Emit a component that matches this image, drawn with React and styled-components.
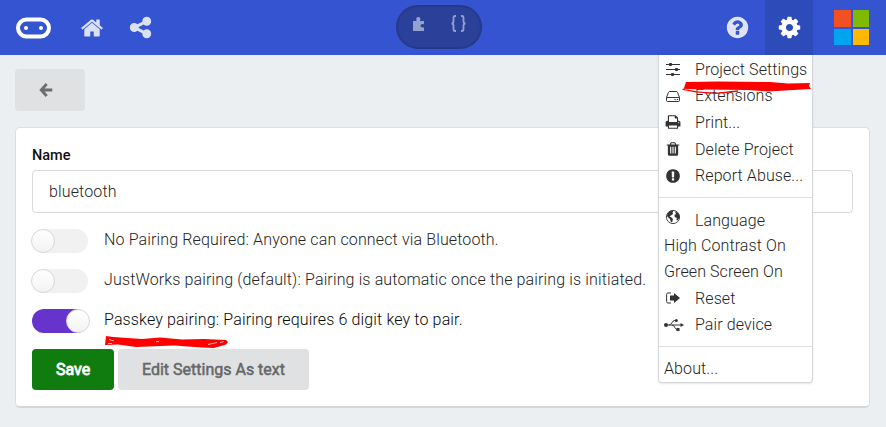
import React from "react";
import styled, { createGlobalStyle } from "styled-components";

const Global = createGlobalStyle`
  *{box-sizing:border-box}
  body{margin:0;background:#ebeff1;font-family:Roboto,sans-serif;font-size:16px;font-weight:300;color:#242424;overflow:hidden}
`;
const Page = styled.div`position:relative;width:886px;height:427px;`;
const Header = styled.header`height:55px;background:#3454d1;display:flex;align-items:stretch;color:#fff;`;
const Left = styled.nav`width:396px;display:flex;align-items:center;padding-left:16px;`;
const Brand = styled.a`display:flex;width:64px;`;
const NavLink = styled.a`display:flex;width:48px;opacity:.82;`;
const Toggle = styled.div`width:86px;height:44px;margin-top:5px;border-radius:22px;background:#2a4099;border:2px solid #27398a;display:flex;align-items:center;padding:0 0 7px 14px;gap:24px;color:#93a0d0;`;
const Right = styled.nav`flex:1;display:flex;justify-content:flex-end;`;
const Cell = styled.a`width:${p => p.$w}px;display:flex;align-items:center;justify-content:center;padding-left:${p => p.$pad || 0}px;background:${p => p.$active ? "#2e4bba" : "transparent"};`;
const Faded = styled.span`display:flex;opacity:.84;`;
const Logo = styled.div`display:grid;grid-template-columns:repeat(2,1fr);gap:2px;width:35px;height:35px;`;
const Tile = styled.i`background:${p => p.$c};`;
const Main = styled.main`padding:14px 16px 0 15px;`;
const Button = styled.button`border:0;border-radius:4px;height:41px;width:${p => p.$w}px;padding:0;font:400 16px Roboto,sans-serif;-webkit-text-stroke:${p => p.$primary ? .8 : .5}px currentColor;letter-spacing:${p => p.$ls || 0}px;background:${p => p.$primary ? "#107c10" : "#dfe1e2"};color:${p => p.$primary ? "#fff" : "#666768"};display:flex;align-items:center;justify-content:center;`;
const BackButton = styled(Button)`height:42px;padding-right:9px;color:#6d6d6e;`;
const Card = styled.section`margin-top:16px;height:281px;background:#fff;border:1px solid #dcdfe1;border-bottom:2px solid #d4d7d9;border-radius:5px;padding:18px 16px 0;`;
const Label = styled.label`display:block;font-weight:500;font-size:14.5px;line-height:20px;color:#111;`;
const Input = styled.input`display:block;width:821px;height:43px;margin:4px 0 16px;border:1px solid #d9d9da;border-radius:4px;padding:0 16px;font:300 16px Roboto,sans-serif;letter-spacing:.14px;color:#242424;outline:0;`;
const Row = styled.div`display:flex;align-items:center;height:24px;margin-bottom:16px;`;
const Track = styled.span`width:56px;height:24px;border-radius:12px;background:${p => p.$on ? "#6633cc" : "#f1f1f1"};display:flex;justify-content:${p => p.$on ? "flex-end" : "flex-start"};`;
const Knob = styled.span`width:24px;height:24px;border-radius:50%;margin:0 -2px 0 -1px;background:linear-gradient(#fff,#f3f3f3);border:1px solid #d8d8d8;`;
const Text = styled.span`margin-left:16px;line-height:20px;padding-bottom:2px;white-space:pre;color:${p => p.$dark ? "#080808" : "#242424"};letter-spacing:.14px;`;
const Actions = styled.div`display:flex;gap:4px;`;
const Menu = styled.div`position:absolute;left:658px;top:55px;width:155px;height:328px;background:#fff;border:1px solid #d5d8da;border-top:0;border-radius:0 0 4px 4px;box-shadow:0 1px 2px rgba(0,0,0,.1);padding-top:1px;`;
const Item = styled.div`display:flex;align-items:center;height:${p => p.$h}px;padding-left:5px;white-space:nowrap;letter-spacing:.1px;`;
const IconSlot = styled.span`width:31px;display:flex;padding-left:${p => p.$x || 0}px;padding-bottom:${p => p.$up || 0}px;color:#333;`;
const Rule = styled.div`height:1px;background:#dfdfdf;margin:${p => p.$m};`;
const Stroke = styled.svg`position:absolute;left:${p => p.$x}px;top:${p => p.$y}px;`;

const paths = {
  home: "M1472 992v480q0 26-19 45t-45 19h-384v-384h-256v384h-384q-26 0-45-19t-19-45v-480q0-1 .5-3t.5-3l575-474 575 474q1 2 1 6zm223-69l-62 74q-8 9-21 11h-3q-13 0-21-7l-692-577-692 577q-12 8-24 7-13-2-21-11l-62-74q-8-10-7-23.5t11-21.5l719-599q32-26 76-26t76 26l244 204v-195q0-14 9-23t23-9h192q14 0 23 9t9 23v408l219 182q10 8 11 21.5t-7 23.5z",
  share: "M1344 1024q133 0 226.5 93.5t93.5 226.5-93.5 226.5-226.5 93.5-226.5-93.5-93.5-226.5q0-12 2-34l-360-180q-92 86-218 86-133 0-226.5-93.5t-93.5-226.5 93.5-226.5 226.5-93.5q126 0 218 86l360-180q-2-22-2-34 0-133 93.5-226.5t226.5-93.5 226.5 93.5 93.5 226.5-93.5 226.5-226.5 93.5q-126 0-218-86l-360 180q2 22 2 34t-2 34l360 180q92-86 218-86z",
  cog: "M1152 896q0-106-75-181t-181-75-181 75-75 181 75 181 181 75 181-75 75-181zm512-109v222q0 12-8 23t-20 13l-185 28q-19 54-39 91 35 50 107 138 10 12 10 25t-9 23q-27 37-99 108t-94 71q-12 0-26-9l-138-108q-44 23-91 38-16 136-29 186-7 28-36 28h-222q-14 0-24.5-8.5t-11.5-21.5l-28-184q-49-16-90-37l-141 107q-10 9-25 9-14 0-25-11-126-114-165-168-7-10-7-23 0-12 8-23 15-21 51-66.5t54-70.5q-27-50-41-99l-183-27q-13-2-21-12.5t-8-23.5v-222q0-12 8-23t19-13l186-28q14-46 39-92-40-57-107-138-10-12-10-24 0-10 9-23 26-36 98.5-107.5t94.5-71.5q13 0 26 10l138 107q44-23 91-38 16-136 29-186 7-28 36-28h222q14 0 24.5 8.5t11.5 21.5l28 184q49 16 90 37l142-107q9-9 24-9 13 0 25 10 129 119 165 170 7 8 7 22 0 12-8 23-15 21-51 66.5t-54 70.5q26 50 41 98l183 28q13 2 21 12.5t8 23.5z",
  help: "M1024 1376v-192q0-14-9-23t-23-9h-192q-14 0-23 9t-9 23v192q0 14 9 23t23 9h192q14 0 23-9t9-23zm256-672q0-88-55.5-163t-138.5-116-170-41q-243 0-371 213-15 24 8 42l132 100q7 6 19 6 16 0 25-12 53-68 86-92 34-24 86-24 48 0 85.5 26t37.5 59q0 38-20 61t-68 45q-63 28-115.5 86.5t-52.5 125.5v36q0 14 9 23t23 9h192q14 0 23-9t9-23q0-19 21.5-49.5t54.5-49.5q32-18 49-28.5t46-35 44.5-48 28-60.5 12.5-81zm384 192q0 209-103 385.5t-279.5 279.5-385.5 103-385.5-103-279.5-279.5-103-385.5 103-385.5 279.5-279.5 385.5-103 385.5 103 279.5 279.5 103 385.5z",
  alert: "M896 128q209 0 385.5 103t279.5 279.5 103 385.5-103 385.5-279.5 279.5-385.5 103-385.5-103-279.5-279.5-103-385.5 103-385.5 279.5-279.5 385.5-103zm128 1247v-190q0-14-9-23.5t-22-9.5h-192q-13 0-23 10t-10 23v190q0 13 10 23t23 10h192q13 0 22-9.500t9-23.500zm-2-344l18-621q0-12-10-18-10-8-24-8h-220q-14 0-24 8-10 6-10 18l17 621q0 10 10 17.500t24 7.500h185q14 0 23.500-7.500t10.500-17.500z",
  trash: "M704 1376v-704q0-14-9-23t-23-9h-64q-14 0-23 9t-9 23v704q0 14 9 23t23 9h64q14 0 23-9t9-23zm256 0v-704q0-14-9-23t-23-9h-64q-14 0-23 9t-9 23v704q0 14 9 23t23 9h64q14 0 23-9t9-23zm256 0v-704q0-14-9-23t-23-9h-64q-14 0-23 9t-9 23v704q0 14 9 23t23 9h64q14 0 23-9t9-23zm-544-992h448l-48-117q-7-9-17-11h-317q-10 2-17 11zm928 32v64q0 14-9 23t-23 9h-96v948q0 83-47 143.5t-113 60.5h-832q-66 0-113-58.5t-47-141.5v-952h-96q-14 0-23-9t-9-23v-64q0-14 9-23t23-9h309l70-167q15-37 54-63t79-26h320q40 0 79 26t54 63l70 167h309q14 0 23 9t9 23z",
  print: "M448 1536h896v-256h-896v256zm0-640h896v-384h-160q-40 0-68-28t-28-68v-160h-640v640zm1152 64q0-26-19-45t-45-19-45 19-19 45 19 45 45 19 45-19 19-45zm128 0v416q0 13-9.5 22.5t-22.5 9.5h-224v160q0 40-28 68t-68 28h-960q-40 0-68-28t-28-68v-160h-224q-13 0-22.5-9.5t-9.5-22.5v-416q0-79 56.5-135.5t135.5-56.5h64v-544q0-40 28-68t68-28h672q40 0 88 20t76 48l152 152q28 28 48 76t20 88v256h64q79 0 135.5 56.5t56.5 135.5z",
};
const Glyph = ({ name, size }) => (
  <svg width={size} height={size} viewBox="0 0 1792 1792" fill="currentColor"><path d={paths[name]} /></svg>
);
const Small = ({ children, w = 16 }) => (
  <svg width={w} height="16" viewBox={`0 0 ${w} 16`} fill="none" stroke="currentColor">{children}</svg>
);
const Sliders = () => <Small><path d="M1 3.500h14M1 8.500h14M1 13.500h14" strokeWidth="1.100" /><path d="M5.500 2v3M11.500 7v3M7.500 12v3" strokeWidth="2.600" /></Small>;
const Drive = () => <Small><path d="M1.500 9.500 3.500 4.300Q3.800 3.500 4.600 3.500h6.800q.8 0 1.100.8l2 5.200v3q0 1-1 1h-11q-1 0-1-1zM1.500 9.500h13" strokeLinejoin="round" /><path d="M9.300 11.500h1.400M11.800 11.500h1.400" /></Small>;
const Globe = () => <Small><circle cx="8" cy="8" r="6.600" strokeWidth=".9" /><path d="M2.500 4.500 5 2h3.500l-1 1.500.5 1.500L6 6.500 4.500 7.200 6.500 8.500 8 10l-1 3.500-1.300-1L5 10 3 8.200 2 7zM10 2.500l2.500 1L14.300 6v3l-1.800 2.500-1-.5.3-2.200-2-.5L9.500 6l1.500-1z" fill="currentColor" stroke="none" /></Small>;
const Exit = () => <Small><path d="M6 3H2.800Q1.600 3 1.600 4.500v7Q1.600 13 2.800 13H6" /><path d="M5 5.500h4V3l6 5-6 5v-2.500H5z" fill="currentColor" stroke="none" /></Small>;
const Usb = () => <Small w={20}><path d="M2 8h15M5 8c3 0 3-4.500 5.500-4.500H12M8 8c3 0 2.500 4.500 5 4.500h1" /><circle cx="2" cy="8" r="2" fill="currentColor" stroke="none" /><circle cx="12.300" cy="3.500" r="1.500" fill="currentColor" stroke="none" /><path d="M12.500 11h3v3h-3zM16.500 6l3.500 2-3.500 2z" fill="currentColor" stroke="none" /></Small>;

const groups = [
  [["Project Settings", <Sliders />, 26.5, 1], ["Extensions", <Drive />, 26.5, 1], ["Print...", <Glyph name="print" size={16} />, 26.5, 1], ["Delete Project", <Glyph name="trash" size={16} />, 27, 1], ["Report Abuse...", <Glyph name="alert" size={16} />, 26, 1]],
  [["Language", <Globe />, 25.5, 1, 6], ["High Contrast On", null, 25.5], ["Green Screen On", null, 26], ["Reset", <Exit />, 27, 1], ["Pair device", <Usb />, 26]],
  [["About...", null, 26]],
];

export default function App() {
  return <Page>
    <Global />
    <Header>
      <Left>
        <Brand><svg width="36" height="22" viewBox="0 0 36 22"><rect x="2" y="2.500" width="31" height="17" rx="8.500" fill="none" stroke="#fff" strokeWidth="4" /><circle cx="10" cy="11" r="2" fill="#fff" /><circle cx="25" cy="11" r="2" fill="#fff" /></svg></Brand>
        <NavLink><Glyph name="home" size={24} /></NavLink>
        <NavLink><Glyph name="share" size={25} /></NavLink>
      </Left>
      <Toggle>
        <svg width="14" height="16" viewBox="0 0 14 16" fill="currentColor"><path d="M1 5h3.500Q3.500 1 6.300 1t1.800 4H12v3.200Q8.500 7.500 8.500 9.800T12 11.500V15H1z" /></svg>
        <svg width="17" height="18" viewBox="0 0 17 18" fill="none" stroke="currentColor" strokeWidth="1.800"><path d="M6 1H5Q3.500 1 3.500 3v3.500Q3.500 8.500 1.500 8.500 3.500 8.500 3.500 10.500V14q0 2 1.500 2h1M11 1h1q1.500 0 1.500 2v3.500q0 2 2 2-2 0-2 2V14q0 2-1.500 2h-1" /></svg>
      </Toggle>
      <Right>
        <Cell $w={56}><Faded><Glyph name="help" size={25} /></Faded></Cell>
        <Cell $w={48} $active><Glyph name="cog" size={25} /></Cell>
        <Cell $w={73} $pad={4}><Logo><Tile $c="#f25022" /><Tile $c="#7fba00" /><Tile $c="#00a4ef" /><Tile $c="#ffb900" /></Logo></Cell>
      </Right>
    </Header>
    <Main>
      <BackButton $w={70}><svg width="14" height="14" viewBox="0 0 14 14" fill="none" stroke="currentColor" strokeWidth="2.800"><path d="M7.700 1 2.200 7 7.700 13M2.500 7H13.300" /></svg></BackButton>
      <Card>
        <Label>Name</Label>
        <Input defaultValue="bluetooth" />
        <Row><Track><Knob /></Track><Text>No Pairing Required: Anyone can connect via Bluetooth.</Text></Row>
        <Row><Track><Knob /></Track><Text>JustWorks pairing (default): Pairing is automatic once the pairing is initiated.</Text></Row>
        <Row><Track $on><Knob /></Track><Text $dark>Passkey pairing: Pairing requires 6 digit key to pair.</Text></Row>
        <Actions><Button $primary $w={82}>Save</Button><Button $w={191}>Edit Settings As text</Button></Actions>
      </Card>
    </Main>
    <Menu>
      {groups.map((g, i) => <React.Fragment key={i}>
        {i > 0 && <Rule $m={i === 1 ? "8px 0 10px" : "8px 0 9px"} />}
        {g.map(([t, icon, h, x, up]) => <Item key={t} $h={h}>{icon && <IconSlot $x={x} $up={up}>{icon}</IconSlot>}{t}</Item>)}
      </React.Fragment>)}
    </Menu>
    <Stroke $x={678} $y={74} width="140" height="24" viewBox="0 0 140 24" fill="#f00">
      <path d="M8 8 40 7.500 92 8 110 9.500 132 9 131 12 133 15 90 17.500 70 16 26 15.500 9 15 6 14z" />
      <path d="M9 13 5.500 15.500 18 17.800 38 19.300 60 17" fill="none" stroke="#f00" strokeWidth="1.300" />
    </Stroke>
    <Stroke $x={98} $y={328} width="136" height="26" viewBox="0 0 136 26" fill="#f00">
      <path d="M8 8 15 9 44 11 62 9.500 84 11.500 106 11 128 12 130 14 128 16.500 116 20 104 19.500 76 17.500 38 19 20 16.500 7 17z" />
      <path d="M11 11.500 16 13M10 15.500 14 15.500M58 13.800 61 13.500M110 16.500 119 14.500M122 14.500 126 13.500" fill="none" stroke="#fff" strokeWidth=".7" />
    </Stroke>
  </Page>;
}
